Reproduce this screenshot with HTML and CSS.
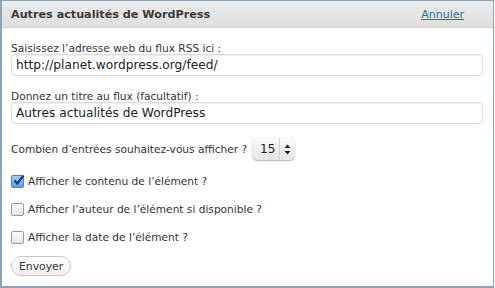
FILE: index.html
```html
<!DOCTYPE html>
<html lang="fr">
<head>
  <meta charset="UTF-8">
  <title>Autres actualités de WordPress</title>
  <link rel="stylesheet" href="styles.css">
</head>
<body>
  <div class="widget">
    <div class="widget-head">
      <h3>Autres actualités de WordPress</h3>
      <a href="#" class="cancel">Annuler</a>
    </div>
    <form class="widget-body">
      <label class="field">
        <span>Saisissez l’adresse web du flux RSS ici :</span>
        <input type="text" class="text" value="http://planet.wordpress.org/feed/">
      </label>
      <label class="field">
        <span>Donnez un titre au flux (facultatif) :</span>
        <input type="text" class="text" value="Autres actualités de WordPress">
      </label>
      <div class="count">
        <span>Combien d’entrées souhaitez-vous afficher ?</span>
        <span class="select">15<span class="arrows"><svg width="7" height="11" viewBox="0 0 7 11"><path d="M3.5 0.5 L6.5 4 L0.5 4 Z M0.5 7 L6.5 7 L3.5 10.5 Z" fill="#222"/></svg></span></span>
      </div>
      <label class="check"><span class="box checked"><svg width="13" height="13" viewBox="0 0 13 13"><path d="M2.5 6.5 L5.2 9.6 L11.5 1.5" stroke="#1b3c72" stroke-width="2.2" fill="none"/></svg></span>Afficher le contenu de l’élément ?</label>
      <label class="check"><span class="box"></span>Afficher l’auteur de l’élément si disponible ?</label>
      <label class="check"><span class="box"></span>Afficher la date de l’élément ?</label>
      <button type="button" class="submit">Envoyer</button>
    </form>
  </div>
</body>
</html>
```

FILE: styles.css
```css
body {
  margin: 0;
  font-family: "DejaVu Sans", "Liberation Sans", sans-serif;
  background: #fff;
}
.widget {
  width: 491px;
  height: 285px;
  border: 1px solid #8ea3b5;
  border-left-width: 2px;
  border-bottom-width: 2px;
  background: #fff;
  overflow: hidden;
}
.widget-head {
  display: flex;
  justify-content: space-between;
  align-items: center;
  height: 26px;
  padding: 0 29px 0 9px;
  background: linear-gradient(#ececec, #dedede);
  border-bottom: 1px solid #d4d4d4;
}
.widget-head h3 {
  margin: 0;
  font-size: 11.2px;
  font-weight: bold;
  color: #3a3a3a;
}
.cancel {
  font-size: 11px;
  color: #21759b;
  text-decoration: underline;
}
.widget-body {
  display: flex;
  flex-direction: column;
  padding: 14px 10px 0 9px;
  font-size: 10.6px;
  color: #333;
}
.field {
  display: flex;
  flex-direction: column;
  margin-bottom: 14px;
}
.text {
  height: 22px;
  box-sizing: border-box;
  border: 1px solid #dcdcdc;
  border-radius: 4px;
  padding: 0 4px;
  font-family: "DejaVu Sans", sans-serif;
  font-size: 12.2px;
  color: #222;
  box-shadow: inset 0 1px 1px #eee;
}
.count {
  display: flex;
  align-items: center;
  gap: 5px;
  margin-bottom: 7px;
}
.select {
  display: flex;
  align-items: center;
  height: 22px;
  width: 43px;
  box-sizing: border-box;
  padding-left: 8px;
  border-radius: 5px;
  background: linear-gradient(#fafafa, #e4e4e4);
  box-shadow: 0 0 1px #999, 0 1px 1px #bbb;
  font-size: 12px;
  color: #222;
}
.arrows {
  margin-left: auto;
  height: 22px;
  width: 15px;
  display: flex;
  align-items: center;
  justify-content: center;
  border-left: 1px solid #d0d0d0;
}
.check {
  display: flex;
  align-items: center;
  gap: 4px;
  height: 28px;
}
.box {
  width: 11px;
  height: 11px;
  border: 1px solid #9a9a9a;
  border-radius: 2px;
  background: linear-gradient(#fdfdfd, #e6e6e6);
  position: relative;
}
.box.checked {
  background: linear-gradient(#a6cdf5, #5e9ee6);
  border-color: #5a7fae;
}
.box svg {
  position: absolute;
  left: 0;
  top: -2px;
}
.submit {
  align-self: flex-start;
  margin-top: 5px;
  height: 20px;
  padding: 0 7px;
  border: 1px solid #c8c8c8;
  border-radius: 10px;
  background: linear-gradient(#fff, #efefef);
  font-family: "DejaVu Sans", sans-serif;
  font-size: 10.8px;
  color: #333;
}
```
